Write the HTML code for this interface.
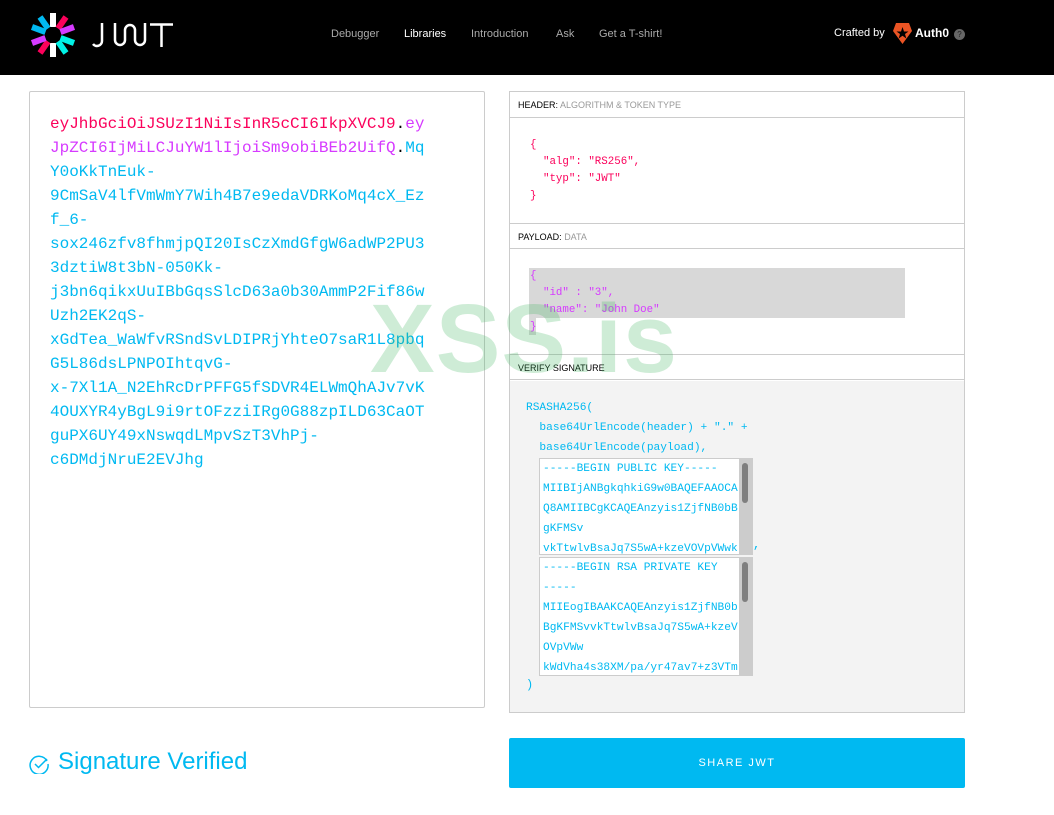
<!DOCTYPE html>
<html><head><style>
*{margin:0;padding:0;box-sizing:border-box}
body{width:1054px;height:815px;background:#fff;font-family:"Liberation Sans",sans-serif;position:relative;overflow:hidden}
.nav{position:absolute;left:0;top:0;width:1054px;height:75px;background:#000}
.nav a{position:absolute;top:28px;font-size:11px;color:#aaa}
.mono{font-family:"Liberation Mono",monospace}
.left{position:absolute;left:29px;top:91px;width:456px;height:617px;border:1px solid #ccc;border-radius:2px}
.tok{position:absolute;left:20px;top:20px;font-size:16px;line-height:24px;white-space:pre;font-family:"Liberation Mono",monospace}
.r{color:#fb015b}.p{color:#d63aff}.b{color:#00b9f1}
.right{position:absolute;left:509px;top:91px;width:456px;height:622px;border:1px solid #ccc}
.lab{position:absolute;left:0;width:454px;height:26px;border-bottom:1px solid #ccc;font-size:9px;color:#000;padding:8px 8px}
.lab span{color:#999}
.box{position:absolute;left:29px;width:214px;border:1px solid #ccc;background:#fff;overflow:hidden;font-family:"Liberation Mono",monospace;font-size:11.2px;line-height:20px;color:#00b9f1;padding-left:3px;white-space:nowrap}
.sb{position:absolute;right:0;top:0;width:13px;height:100%;background:#ccc}
.sb i{position:absolute;left:3px;top:4px;width:6px;height:40px;background:#7f7f7f;border-radius:3px}
</style></head><body>
<div class="nav">
<svg style="position:absolute;left:29px;top:11px" width="48" height="48" viewBox="-24 -24 48 48">
<g stroke-width="6" stroke-linecap="butt">
<line x1="0" y1="-8" x2="0" y2="-22" stroke="#fff"/>
<line x1="0" y1="8" x2="0" y2="22" stroke="#fff"/>
<line x1="5" y1="-6.5" x2="13" y2="-18" stroke="#fb015b"/>
<line x1="-5" y1="6.5" x2="-13" y2="18" stroke="#fb015b"/>
<line x1="7.5" y1="-3" x2="21" y2="-8" stroke="#d63aff"/>
<line x1="-7.5" y1="3" x2="-21" y2="8" stroke="#d63aff"/>
<line x1="7.5" y1="3" x2="21" y2="8" stroke="#00f2e6"/>
<line x1="-7.5" y1="-3" x2="-21" y2="-8" stroke="#00b9f1"/>
<line x1="5" y1="6.5" x2="13" y2="18" stroke="#00f2e6"/>
<line x1="-5" y1="-6.5" x2="-13" y2="-18" stroke="#00b9f1"/>
</g></svg>
<svg style="position:absolute;left:92px;top:22px" width="82" height="26" viewBox="0 0 82 26" fill="none" stroke="#fff" stroke-width="2.5">
<path d="M10 1V19a5 5 0 0 1-9 3"/><path d="M23 1V18a5 5 0 0 0 10 0V8a5 5 0 0 1 10 0V18a5 5 0 0 0 10 0V1"/><path d="M58 2.5H81M69.5 2.5V25"/></svg>
<a style="left:331px">Debugger</a><a style="left:404px;color:#fff">Libraries</a><a style="left:471px">Introduction</a><a style="left:556px">Ask</a><a style="left:599px">Get a T-shirt!</a>
<div style="position:absolute;left:834px;top:27px;font-size:11px;color:#fff">Crafted by</div>
<svg style="position:absolute;left:893px;top:23px" width="19" height="21" viewBox="0 0 19 21"><path d="M3 0H16L19 8L9.5 21L0 8Z" fill="#eb5424"/><path d="M9.5 4L11 8.5H15.5L12 11L13.3 15.5L9.5 12.8L5.7 15.5L7 11L3.5 8.5H8Z" fill="#000"/></svg>
<div style="position:absolute;left:915px;top:26px;font-size:12px;font-weight:bold;color:#fff">Auth0</div>
<div style="position:absolute;left:954px;top:29px;width:11px;height:11px;border-radius:50%;background:#666;color:#222;font-size:8px;text-align:center;line-height:11px">?</div>
</div>

<div class="left"><div class="tok"><span class="r">eyJhbGciOiJSUzI1NiIsInR5cCI6IkpXVCJ9</span>.<span class="p">ey
JpZCI6IjMiLCJuYW1lIjoiSm9obiBEb2UifQ</span>.<span class="b">Mq
Y0oKkTnEuk-
9CmSaV4lfVmWmY7Wih4B7e9edaVDRKoMq4cX_Ez
f_6-
sox246zfv8fhmjpQI20IsCzXmdGfgW6adWP2PU3
3dztiW8t3bN-050Kk-
j3bn6qikxUuIBbGqsSlcD63a0b30AmmP2Fif86w
Uzh2EK2qS-
xGdTea_WaWfvRSndSvLDIPRjYhteO7saR1L8pbq
G5L86dsLPNPOIhtqvG-
x-7Xl1A_N2EhRcDrPFFG5fSDVR4ELWmQhAJv7vK
4OUXYR4yBgL9i9rtOFzziIRg0G88zpILD63CaOT
guPX6UY49xNswqdLMpvSzT3VhPj-
c6DMdjNruE2EVJhg</span></div></div>

<div class="right">
<div class="lab" style="top:0">HEADER: <span>ALGORITHM &amp; TOKEN TYPE</span></div>
<div class="mono" style="position:absolute;left:20px;top:45px;font-size:10.8px;line-height:17px;color:#fb015b;white-space:pre">{
  "alg": "RS256",
  "typ": "JWT"
}</div>
<div class="lab" style="top:131px;border-top:1px solid #ccc">PAYLOAD: <span>DATA</span></div>
<div style="position:absolute;left:19px;top:176px;width:376px;height:50px;background:#d8d8d8"></div>
<div style="position:absolute;left:19px;top:176px;width:7px;height:67px;background:#d8d8d8"></div>
<div class="mono" style="position:absolute;left:20px;top:176px;font-size:10.8px;line-height:17px;color:#d63aff;white-space:pre">{
  "id" : "3",
  "name": "John Doe"
}</div>
<div class="lab" style="top:262px;border-top:1px solid #ccc">VERIFY SIGNATURE</div>
<div style="position:absolute;left:0;top:289px;width:454px;height:331px;background:#f3f3f3"></div>
<div class="mono" style="position:absolute;left:16px;top:306px;font-size:11.2px;line-height:20px;color:#00b9f1;white-space:pre">RSASHA256(
  base64UrlEncode(header) + "." +
  base64UrlEncode(payload),</div>
<div class="box" style="top:366px;height:97px">-----BEGIN PUBLIC KEY-----<br>MIIBIjANBgkqhkiG9w0BAQEFAAOCA<br>Q8AMIIBCgKCAQEAnzyis1ZjfNB0bB<br>gKFMSv<br>vkTtwlvBsaJq7S5wA+kzeVOVpVWwk<div class="sb"><i></i></div></div>
<div class="mono" style="position:absolute;left:243px;top:446px;font-size:12px;color:#00b9f1">,</div>
<div class="box" style="top:465px;height:119px">-----BEGIN RSA PRIVATE KEY<br>-----<br>MIIEogIBAAKCAQEAnzyis1ZjfNB0b<br>BgKFMSvvkTtwlvBsaJq7S5wA+kzeV<br>OVpVWw<br>kWdVha4s38XM/pa/yr47av7+z3VTm<div class="sb"><i></i></div></div>
<div class="mono" style="position:absolute;left:16px;top:586px;font-size:12px;color:#00b9f1">)</div>
</div>

<div style="position:absolute;left:370px;top:283px;font-size:97px;font-weight:bold;color:rgba(60,180,90,0.25);letter-spacing:1px">XSS.is</div>

<svg style="position:absolute;left:29px;top:754px" width="20" height="20" viewBox="0 0 20 20" fill="none" stroke="#00b9f1" stroke-width="1.5"><path d="M18 7A9 9 0 1 0 19 10"/><path d="M6 10l3.5 3.5L18 5"/></svg>
<div style="position:absolute;left:58px;top:748px;font-size:24px;color:#00b9f1">Signature Verified</div>
<div style="position:absolute;left:509px;top:738px;width:456px;height:50px;background:#00b9f1;border-radius:2px;color:#fff;font-size:11px;letter-spacing:1.5px;text-align:center;line-height:50px">SHARE JWT</div>
</body></html>
